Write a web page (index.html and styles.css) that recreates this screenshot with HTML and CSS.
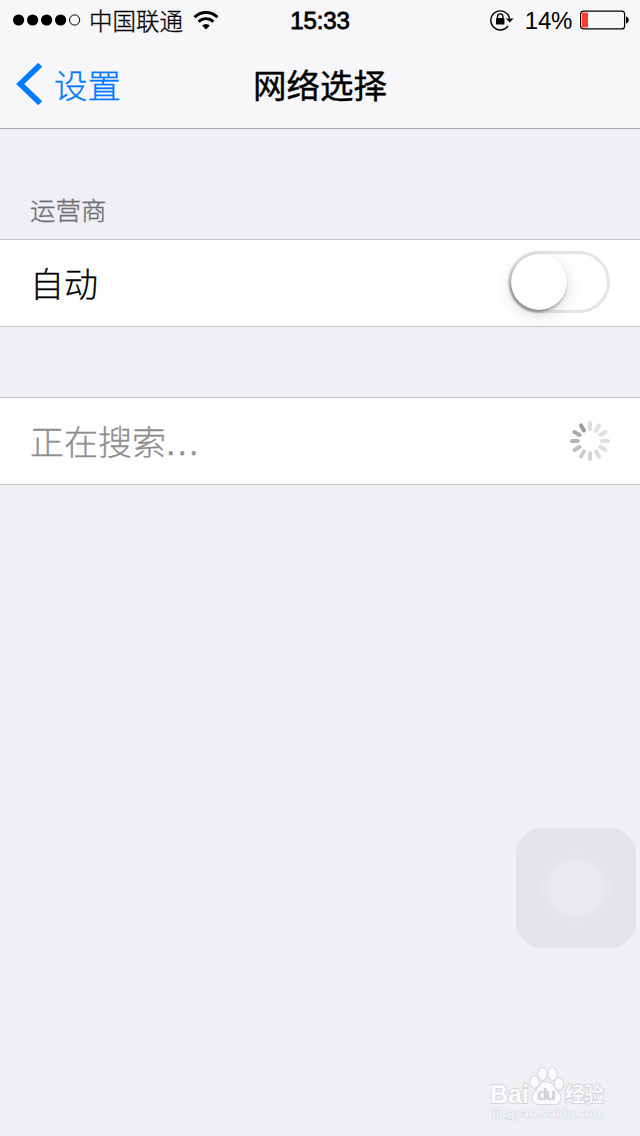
FILE: index.html
```html
<!DOCTYPE html>
<html lang="zh-CN">
<head>
  <meta charset="UTF-8">
  <meta name="viewport" content="width=device-width, initial-scale=1.0">
  <title>网络选择</title>
  <link rel="stylesheet" href="styles.css">
</head>
<body>

  <!-- Status bar and navigation -->
  <header class="header">
    <div class="status-bar">
      <div class="status-left">
        <svg class="signal" width="68" height="12" viewBox="0 0 68 12">
          <circle cx="5.6" cy="6" r="5.6"/>
          <circle cx="19.6" cy="6" r="5.6"/>
          <circle cx="33.6" cy="6" r="5.6"/>
          <circle cx="47.6" cy="6" r="5.6"/>
          <circle cx="61.6" cy="6" r="5.1" fill="none" stroke="#000"/>
        </svg>
        <span class="carrier">中国联通</span>
        <svg class="wifi" width="26" height="19" viewBox="0 0 26 19">
          <path d="M1.5 6.3 A16.3 16.3 0 0 1 24.5 6.3" fill="none" stroke="#000" stroke-width="3"/>
          <path d="M5.6 10.7 A10.5 10.5 0 0 1 20.4 10.7" fill="none" stroke="#000" stroke-width="2.8"/>
          <path d="M13 18.5 L9.2 14.6 A5.4 5.4 0 0 1 16.8 14.6 Z"/>
        </svg>
      </div>
      <span class="time">15:33</span>
      <div class="status-right">
        <svg class="lock" width="24" height="22" viewBox="0 0 24 22">
          <path d="M18 17 A9.5 9.5 0 1 1 19.6 9.5" fill="none" stroke="#000" stroke-width="1.4"/>
          <path d="M15.8 9.4 H23.6 L19.7 13.6 Z"/>
          <rect x="6" y="9" width="8.4" height="6.6" rx="0.6"/>
          <path d="M7.5 9.5 V7.6 A2.7 2.7 0 0 1 12.9 7.6 V9.5" fill="none" stroke="#000" stroke-width="1.4"/>
        </svg>
        <span class="percent">14%</span>
        <svg class="battery" width="50" height="20" viewBox="0 0 50 20">
          <rect x="0.6" y="1.1" width="44" height="17.8" rx="3" fill="none" stroke="#000" stroke-width="1.2"/>
          <rect x="2" y="2.5" width="6" height="15" rx="1" fill="#ff3b30"/>
          <path d="M46 6.5 A3.5 3.6 0 0 1 46 13.5 Z"/>
        </svg>
      </div>
    </div>
    <nav class="nav">
      <a class="back" href="#">
        <svg width="26" height="42" viewBox="0 0 26 42">
          <path d="M24.2 1.8 L4.2 21 L24.2 40.2" fill="none" stroke="#007aff" stroke-width="5.6"/>
        </svg>
        <span>设置</span>
      </a>
      <h1>网络选择</h1>
    </nav>
  </header>

  <main>
    <h2 class="section-title">运营商</h2>
    <div class="row">
      <span>自动</span>
      <div class="switch"><div class="knob"></div></div>
    </div>
    <div class="row row-search">
      <span>正在搜索<span class="dots">...</span></span>
      <svg class="spinner" width="40" height="40" viewBox="-20 -20 40 40">
        <g stroke-width="4" stroke-linecap="round">
          <line y1="-18" y2="-12" stroke="#dfdfdf"/>
          <line y1="-18" y2="-12" stroke="#dfdfdf" transform="rotate(30)"/>
          <line y1="-18" y2="-12" stroke="#dfdfdf" transform="rotate(60)"/>
          <line y1="-18" y2="-12" stroke="#dfdfdf" transform="rotate(90)"/>
          <line y1="-18" y2="-12" stroke="#dfdfdf" transform="rotate(120)"/>
          <line y1="-18" y2="-12" stroke="#dcdcdc" transform="rotate(150)"/>
          <line y1="-18" y2="-12" stroke="#d4d4d4" transform="rotate(180)"/>
          <line y1="-18" y2="-12" stroke="#cbcbcb" transform="rotate(210)"/>
          <line y1="-18" y2="-12" stroke="#c0c0c0" transform="rotate(240)"/>
          <line y1="-18" y2="-12" stroke="#b5b5b5" transform="rotate(270)"/>
          <line y1="-18" y2="-12" stroke="#aaaaaa" transform="rotate(300)"/>
          <line y1="-18" y2="-12" stroke="#9d9d9d" transform="rotate(330)"/>
        </g>
      </svg>
    </div>
  </main>

  <!-- Floating touch button -->
  <div class="assistive"><div class="ring"><div class="ring"><div class="dot"></div></div></div></div>

  <!-- Watermark -->
  <div class="watermark">
    <svg width="124" height="62" viewBox="0 0 124 62">
      <g class="mark">
        <ellipse cx="43.5" cy="19" rx="4.3" ry="5.8"/>
        <ellipse cx="51.5" cy="11" rx="4.3" ry="6"/>
        <ellipse cx="61.5" cy="11" rx="4.3" ry="6"/>
        <ellipse cx="68" cy="21" rx="4.3" ry="5.8"/>
        <path d="M55 19 C49 19 48 25 44 29 C40 33 41 41 48 41 H63 C70 41 71 33 67 29 C63 25 62 19 55 19 Z"/>
        <text x="-1" y="40" class="latin" textLength="39">Bai</text>
        <text x="74" y="39" class="cjk" textLength="39">经验</text>
        <text x="1" y="55" class="url" textLength="113">jingyan.baidu.com</text>
      </g>
      <text x="46" y="37" class="du" textLength="19">du</text>
    </svg>
  </div>

</body>
</html>
```
FILE: styles.css
```css
* {
  box-sizing: border-box;
}

body {
  margin: 0;
  height: 1136px;
  background: #efeff4;
  color: #000;
  font-family: "Liberation Sans", "Noto Sans CJK SC", sans-serif;
  font-weight: 300;
  -webkit-text-stroke: 0.3px;
  overflow: hidden;
}

svg {
  display: block;
  flex: none;
}

/* header */
.header {
  height: 129px;
  background: #f7f7f9;
  border-bottom: 1px solid #a9a9af;
}

.status-bar {
  display: grid;
  grid-template-columns: 1fr auto 1fr;
  align-items: center;
  height: 40px;
  padding: 0 10px 0 13px;
  font-size: 24px;
  line-height: 40px;
}

.status-left,
.status-right {
  display: flex;
  align-items: center;
}

.status-right {
  justify-content: flex-end;
}

.carrier {
  margin: 0 10px 0 8px;
  padding-top: 5px;
  font-size: 23.5px;
  line-height: 35px;
}

.time {
  padding: 2px 3px 0 0;
  font-size: 24px;
  font-weight: 400;
  line-height: 38px;
  letter-spacing: -0.1px;
  -webkit-text-stroke: 0.8px;
}

.percent {
  margin: 0 8px 0 11px;
  padding-top: 2px;
  line-height: 38px;
  letter-spacing: -0.3px;
  -webkit-text-stroke: 0;
}

.nav {
  display: grid;
  grid-template-columns: 1fr auto 1fr;
  align-items: center;
  height: 88px;
  padding: 0 16px;
}

.back {
  display: flex;
  align-items: center;
  gap: 12px;
  color: #007aff;
  font-size: 33.5px;
  text-decoration: none;
}

.back span,
.nav h1 {
  padding-bottom: 2px;
}

.nav h1 {
  margin: 0;
  font-size: 33.5px;
  font-weight: 400;
  -webkit-text-stroke: 0.4px;
}

/* list */
.section-title {
  height: 110px;
  margin: 0;
  padding: 61px 30px 0;
  color: #6d6d72;
  font-size: 25.5px;
  font-weight: 300;
  line-height: 42px;
}

.row {
  display: flex;
  align-items: center;
  justify-content: space-between;
  height: 88px;
  padding: 0 30px;
  background: #fff;
  border-top: 1px solid #c8c7cc;
  border-bottom: 1px solid #c8c7cc;
  font-size: 34px;
}

.row > span {
  padding-bottom: 2px;
}

.row-search {
  margin-top: 70px;
  color: #8e8e8e;
}

.dots {
  letter-spacing: 2px;
}

.switch {
  width: 102px;
  height: 62px;
  margin-bottom: 2px;
  border: 3px solid #e5e5e5;
  border-radius: 31px;
}

.knob {
  width: 56px;
  height: 56px;
  border-radius: 50%;
  background: #fff;
  box-shadow: -1px 2px 3px rgba(0, 0, 0, 0.4), 0 5px 16px rgba(0, 0, 0, 0.15);
}

/* floating button */
.assistive {
  position: absolute;
  left: 516px;
  top: 828px;
  display: flex;
  align-items: center;
  justify-content: center;
  width: 120px;
  height: 120px;
  border-radius: 27px;
  background: #e3e3e7;
}

.ring {
  padding: 8px;
  border-radius: 50%;
  background: #e4e4e8;
}

.ring .ring {
  background: #e6e6ea;
}

.dot {
  width: 58px;
  height: 58px;
  border-radius: 50%;
  background: #eaeaee;
}

/* watermark */
.watermark {
  position: absolute;
  left: 491px;
  top: 1063px;
  -webkit-text-stroke: 0;
}

.mark {
  fill: #fbfbfd;
  stroke: #d6d6db;
  stroke-width: 2px;
  paint-order: stroke;
}

.latin {
  font-size: 25px;
  font-weight: 700;
}

.cjk {
  font-size: 20px;
  font-weight: 500;
}

.url {
  font-family: "Noto Sans", sans-serif;
  font-size: 13px;
  font-weight: 400;
  stroke-width: 1.2px;
}

.du {
  fill: #cfcfd4;
  font-size: 17px;
  font-weight: 700;
}
```
